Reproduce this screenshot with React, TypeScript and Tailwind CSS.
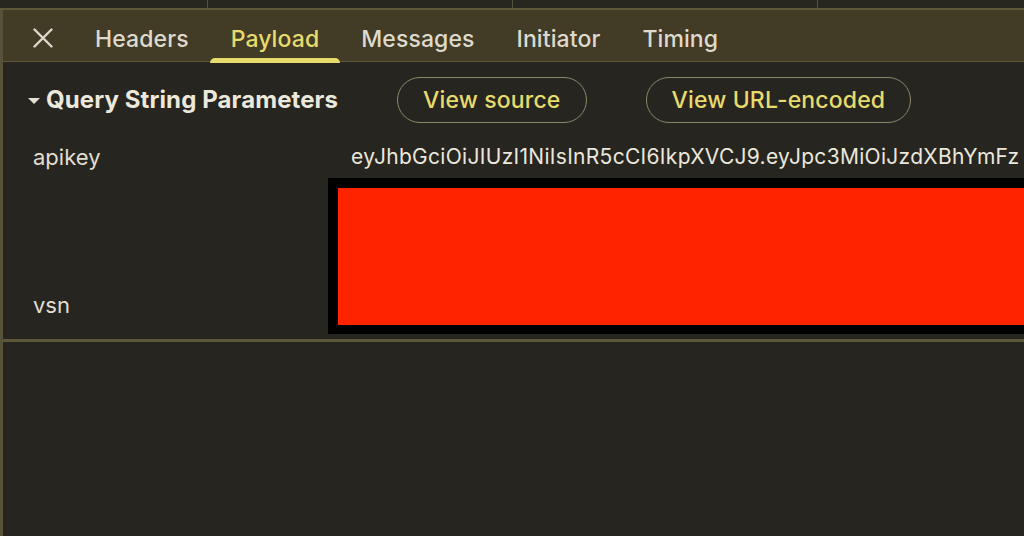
const tabs = ["Headers", "Payload", "Messages", "Initiator", "Timing"];

function TabBar() {
  return (
    <div className="flex h-[52px] items-stretch bg-[#423b25] border-b border-[#5d5839]">
      <div className="flex w-[71px] items-center pl-[30px] pt-[4px]">
        <svg width="20" height="20" viewBox="0 0 20 20">
          <path d="M1.5 1.5 L18.5 18.5 M18.5 1.5 L1.5 18.5" stroke="#dcd8cb" strokeWidth="2.4" strokeLinecap="round" />
        </svg>
      </div>
      <div className="flex items-stretch">
        {tabs.map((t) => {
          const active = t === "Payload";
          return (
            <div key={t} className="relative flex items-center px-[21px] pt-[7px]">
              <span
                className={
                  "text-[23px] font-medium tracking-[0.1px] " +
                  (active ? "text-[#e7db6e]" : "text-[#dedacd]")
                }
              >
                {t}
              </span>
              {active && (
                <div className="absolute bottom-[-2px] left-0 right-0 h-[5px] rounded-t-full bg-[#e7db6e]" />
              )}
            </div>
          );
        })}
      </div>
    </div>
  );
}

function PillButton({ label }: { label: string }) {
  return (
    <button className="h-[46px] rounded-full border border-[#8d876a] px-[25px] text-[23px] font-medium tracking-[0.15px] text-[#e7db6e]">
      {label}
    </button>
  );
}

export default function App() {
  return (
    <div className="flex h-[536px] w-[1024px] flex-col overflow-hidden bg-[#26251f] font-['Inter',sans-serif]">
      {/* strip of the request table above */}
      <div className="flex h-[10px] border-b-2 border-[#5d5839] bg-[#28271f]">
        <div className="w-[208px] border-r border-[#55523b]" />
        <div className="w-[305px] border-r border-[#55523b]" />
        <div className="w-[305px] border-r border-[#55523b]" />
        <div className="flex-1" />
      </div>

      <div className="flex flex-1 flex-col border-l-[3px] border-[#57533a]">
        <TabBar />

        <div className="flex items-center pt-[15px] pl-[24px]">
          <svg width="14" height="10" viewBox="0 0 14 10" className="mr-[5px] mt-[1px]">
            <path d="M1 2 L13 2 L7 8 Z" fill="#e4e0d4" />
          </svg>
          <span className="text-[24px] font-bold tracking-[0.1px] text-[#ece8dc]">
            Query String Parameters
          </span>
          <div className="ml-[59px] flex gap-[59px]">
            <PillButton label="View source" />
            <PillButton label="View URL-encoded" />
          </div>
        </div>

        <div className="relative mt-[12px]">
          <div className="flex h-[44px] items-center">
            <div className="w-[348px] pl-[30px] text-[22px] text-[#e2ded2]">apikey</div>
            <div className="whitespace-nowrap text-[21px] tracking-[0.3px] text-[#ebe7dc]">
              eyJhbGciOiJIUzI1NiIsInR5cCI6IkpXVCJ9.eyJpc3MiOiJzdXBhYmFz
            </div>
          </div>
          <div className="h-[103px]" />
          <div className="flex h-[46px] items-center">
            <div className="w-[348px] pl-[30px] text-[22px] text-[#e2ded2]">vsn</div>
          </div>
          {/* redaction over the values */}
          <div className="absolute left-[325px] top-[43px] h-[156px] w-[700px] border-[10px] border-r-[3px] border-b-[9px] border-black bg-[#ff2300]" />
        </div>

        <div className="mt-[11px] border-t-[3px] border-[#5d5839]" />
        <div className="flex-1" />
      </div>
    </div>
  );
}
